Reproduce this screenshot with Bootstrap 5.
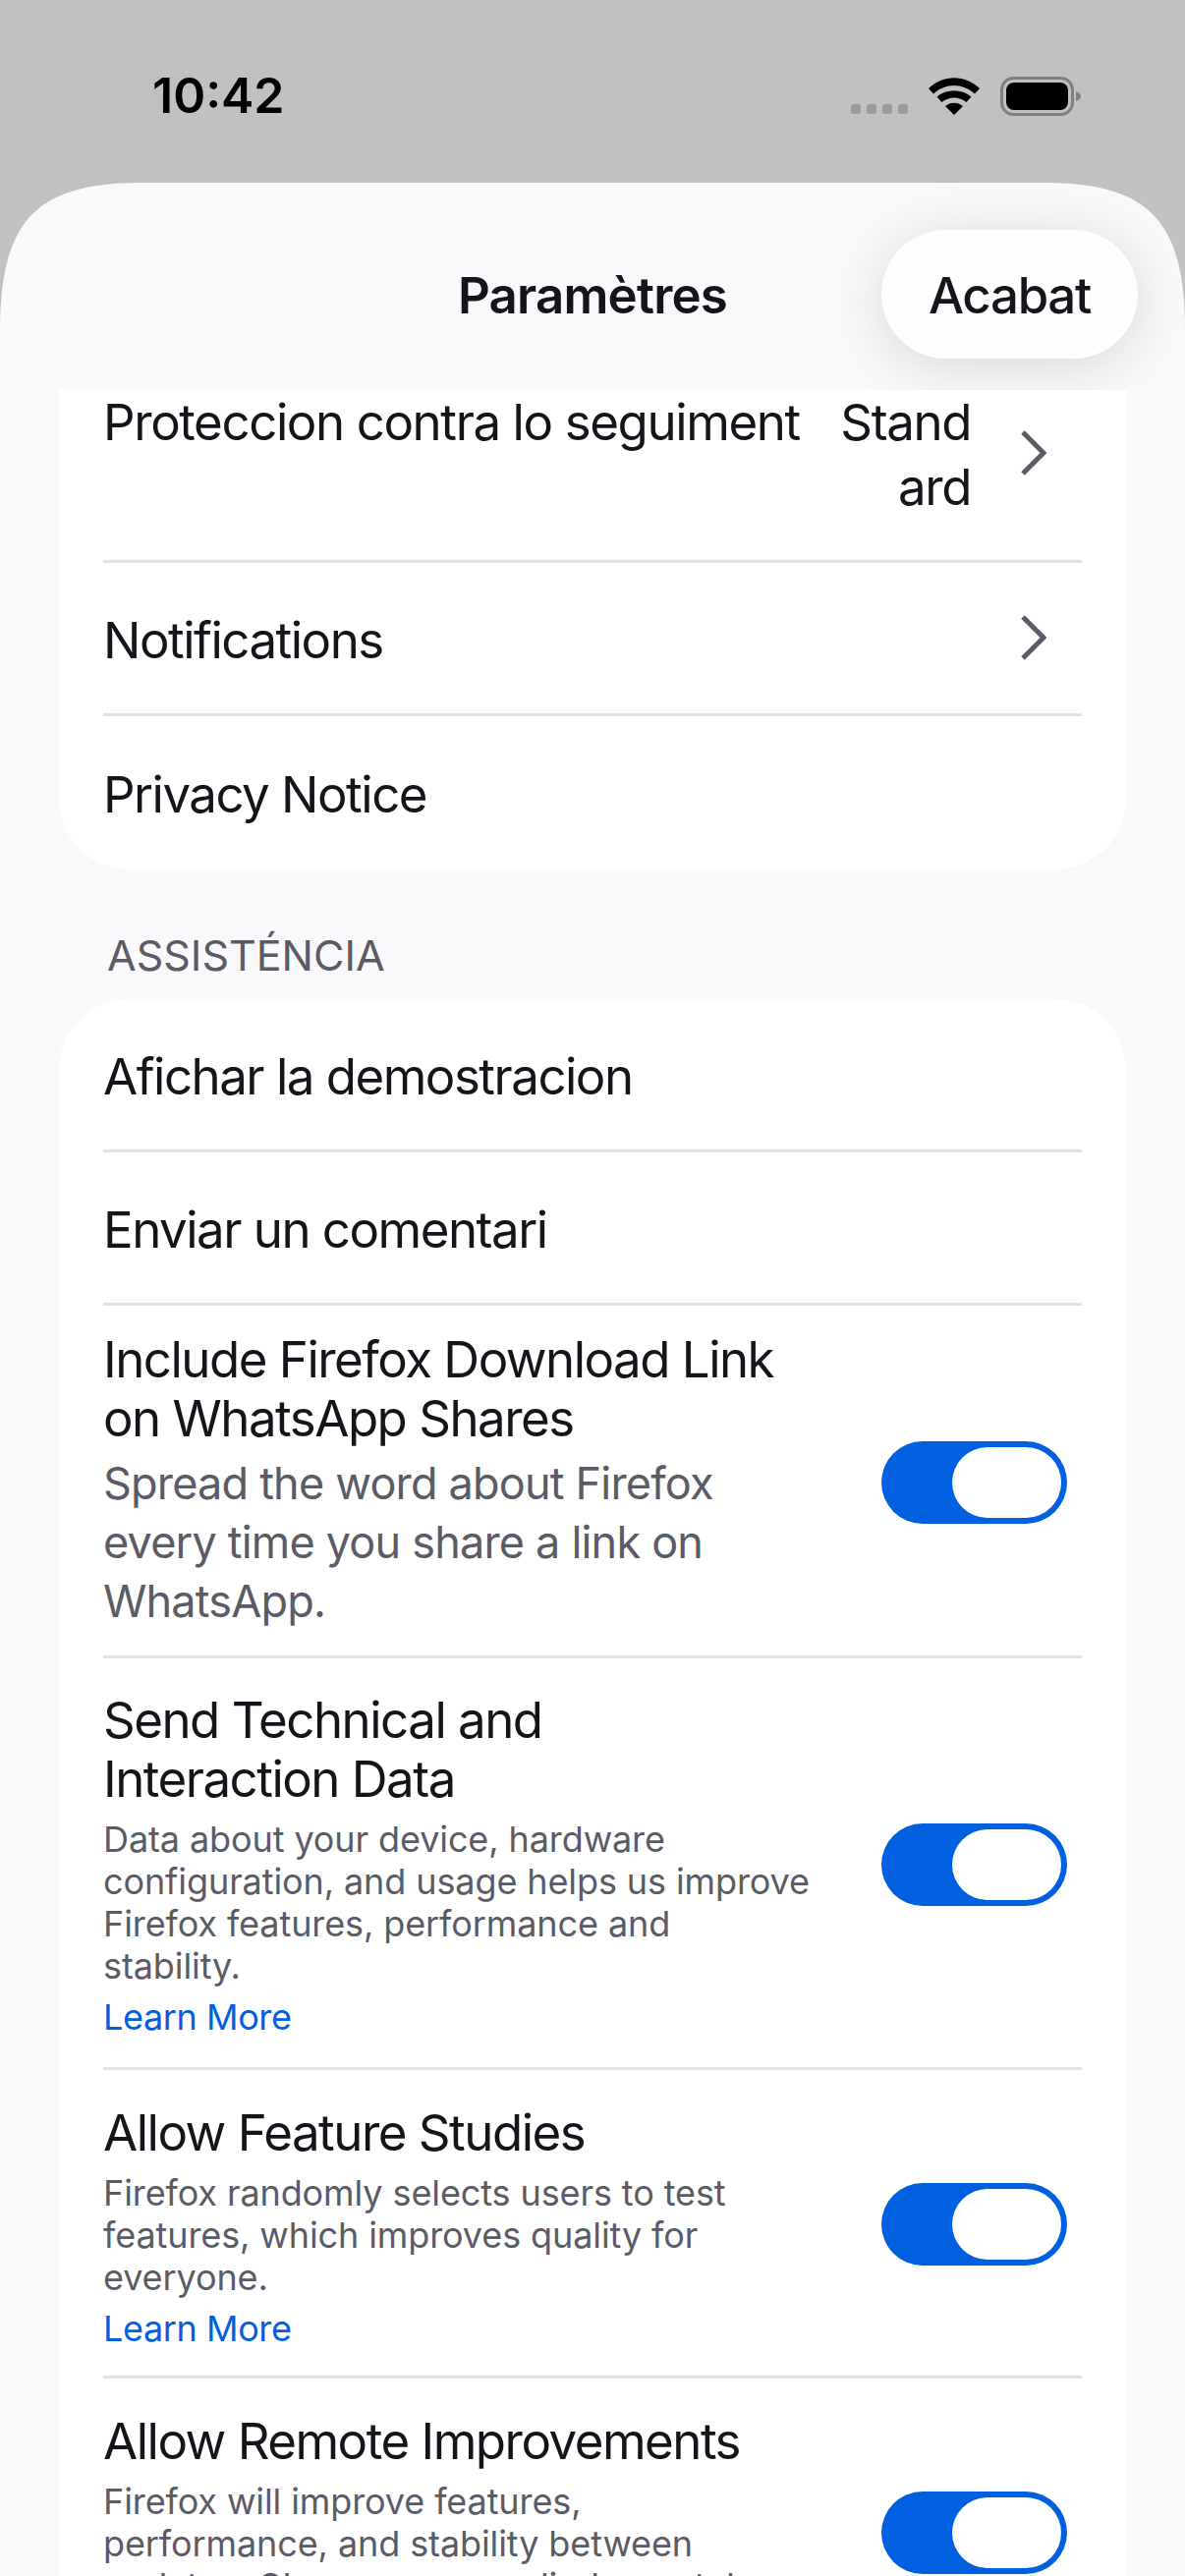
<!DOCTYPE html>
<html lang="fr">
<head>
    <meta charset="UTF-8">
    <title>Paramètres</title>
    <meta name="viewport" content="width=device-width, initial-scale=1">
    <link href="https://cdn.jsdelivr.net/npm/bootstrap@5.3.3/dist/css/bootstrap.min.css" rel="stylesheet">
    <style>
        html, body { height: 2622px; overflow: hidden; }
        body { background: #c1c1c3; font-family: Inter, "Liberation Sans", sans-serif; color: #15141a; }
        .status-bar { height: 186px; padding: 0 105px 0 155px; padding-top: 72px; }
        .status-time { font-size: 50px; font-weight: 600; line-height: 50px; color: #000; }
        .status-icons { margin-top: 6px; gap: 21px; }
        .sheet { height: 2436px; background: #f9f9fb; overflow: hidden; clip-path: path("M0 2436V150C0 35 40 0 145 0H1061C1166 0 1206 35 1206 150V2436Z"); }
        .sheet-head { height: 211px; padding: 48px 48px 0 0; overflow: hidden; }
        .sheet-title { font-size: 51px; font-weight: 600; line-height: 60px; letter-spacing: -.8px; left: 0; right: 0; top: 85px; text-align: center; }
        .done-btn { width: 261px; height: 131px; border-radius: 66px; background: #fdfdfe; border: 0; font-size: 51px; font-weight: 500; line-height: 60px; letter-spacing: -1.3px; color: #15141a; box-shadow: 0 8px 60px rgba(0,0,0,.14); padding: 2px 0 0; }
        .set-group { margin: 0 60px; background: #fff; border-radius: 72px; padding-left: 45px; padding-right: 45px; }
        .set-group.is-cut { border-radius: 0 0 72px 72px; }
        .set-row { border-bottom: 3px solid #e0e0e6; }
        .set-row:last-child { border-bottom: 0; }
        .row-plain { height: 156px; font-size: 51px; line-height: 60px; letter-spacing: -1.5px; padding-top: 4px; }
        .row-plain .chev { margin-top: -6px; }
        .row-cut { height: 176px; font-size: 51px; line-height: 60px; letter-spacing: -1.4px; }
        .row-label { white-space: nowrap; margin-top: 3px; }
        .row-value { width: 150px; line-height: 66px; text-align: right; word-break: break-all; margin: 0 51px 0 0; flex: none; }
        .chev { flex: none; margin-right: 36px; }
        .row-cut .chev { margin-top: 41px; }
        .row-text { width: 722px; }
        .row-title { font-size: 51px; line-height: 60px; letter-spacing: -1.5px; }
        .row-sub-lg { font-size: 45px; line-height: 60px; letter-spacing: -.8px; color: #5b5b66; margin-top: 6px; }
        .row-sub { font-size: 36px; line-height: 43px; letter-spacing: -.1px; color: #5b5b66; margin-top: 10px; }
        .row-link { display: block; font-size: 36px; line-height: 43px; letter-spacing: -.4px; color: #0060df; text-decoration: none; margin-top: 9px; }
        .pad-a { padding-top: 25px; padding-bottom: 25px; }
        .pad-a .sw-track { margin-top: 3px; }
        .pad-b { padding-top: 33px; padding-bottom: 29px; }
        .pad-c { padding-top: 34px; padding-bottom: 26px; }
        .pad-c .sw-track { margin-top: -5px; }
        .section-label { font-size: 43px; line-height: 50px; color: #5b5b66; margin: 62px 0 20px 109px; }
        .sw-track { flex: none; width: 189px; height: 84px; border-radius: 42px; background: #0060df; margin-right: 15px; padding: 6px; }
        .sw-knob { width: 111px; height: 72px; border-radius: 36px; background: #fff; }
    </style>
</head>
<body>
    <!-- status bar -->
    <div class="status-bar d-flex justify-content-between align-items-start">
        <div class="status-time">10:42</div>
        <div class="status-icons d-flex align-items-center">
            <svg width="58" height="40" viewBox="0 0 58 40">
                <g fill="#9b9b9d"><rect x="0" y="28" width="10" height="10" rx="3"/><rect x="16" y="28" width="10" height="10" rx="3"/><rect x="32" y="28" width="10" height="10" rx="3"/><rect x="48" y="28" width="10" height="10" rx="3"/></g>
            </svg>
            <svg width="52" height="38" viewBox="0 0 52 38">
                <path d="M26 38l-9-9c5-4.500 13-4.500 18 0z"/>
                <path d="M13.500 25l-5-5.500c10-8.500 25-8.500 35 0l-5 5.500c-7.500-6-17.500-6-25 0z"/>
                <path d="M5 16.500L0 11c15-14.500 37-14.500 52 0l-5 5.500C34.500 5 17.500 5 5 16.500z"/>
            </svg>
            <svg width="83" height="40" viewBox="0 0 83 40">
                <rect x="1.500" y="1.500" width="72" height="37" rx="12" fill="none" stroke="#808082" stroke-width="3"/>
                <rect x="6" y="6" width="63" height="28" rx="8"/>
                <path d="M77 15c3 1 5 3 5 5s-2 4-5 5z" fill="#808082"/>
            </svg>
        </div>
    </div>

    <div class="sheet">
        <div class="sheet-head position-relative d-flex justify-content-end">
            <div class="sheet-title position-absolute">Paramètres</div>
            <button class="done-btn position-relative" type="button">Acabat</button>
        </div>

        <div class="set-group is-cut">
            <div class="set-row row-cut d-flex align-items-start">
                <div class="row-label flex-grow-1">Proteccion contra lo seguiment</div>
                <div class="row-value">Standard</div>
                <svg class="chev" width="26" height="46" viewBox="0 0 26 46"><path d="M2 2l21 21L2 44" fill="none" stroke="#5b5b66" stroke-width="5"/></svg>
            </div>
            <div class="set-row row-plain d-flex align-items-center justify-content-between">
                <div>Notifications</div>
                <svg class="chev" width="26" height="46" viewBox="0 0 26 46"><path d="M2 2l21 21L2 44" fill="none" stroke="#5b5b66" stroke-width="5"/></svg>
            </div>
            <div class="set-row row-plain d-flex align-items-center">
                <div>Privacy Notice</div>
            </div>
        </div>

        <div class="section-label">ASSISTÉNCIA</div>

        <div class="set-group">
            <div class="set-row row-plain d-flex align-items-center">
                <div>Afichar la demostracion</div>
            </div>
            <div class="set-row row-plain d-flex align-items-center">
                <div>Enviar un comentari</div>
            </div>
            <div class="set-row pad-a d-flex align-items-center justify-content-between">
                <div class="row-text">
                    <div class="row-title">Include Firefox Download Link on WhatsApp Shares</div>
                    <div class="row-sub-lg">Spread the word about Firefox every time you share a link on WhatsApp.</div>
                </div>
                <div class="sw-track d-flex justify-content-end"><div class="sw-knob"></div></div>
            </div>
            <div class="set-row pad-b d-flex align-items-center justify-content-between">
                <div class="row-text">
                    <div class="row-title">Send Technical and<br>Interaction Data</div>
                    <div class="row-sub">Data about your device, hardware configuration, and usage helps us improve Firefox features, performance and stability.</div>
                    <a class="row-link" href="#">Learn More</a>
                </div>
                <div class="sw-track d-flex justify-content-end"><div class="sw-knob"></div></div>
            </div>
            <div class="set-row pad-c d-flex align-items-center justify-content-between">
                <div class="row-text">
                    <div class="row-title">Allow Feature Studies</div>
                    <div class="row-sub">Firefox randomly selects users to test features, which improves quality for everyone.</div>
                    <a class="row-link" href="#">Learn More</a>
                </div>
                <div class="sw-track d-flex justify-content-end"><div class="sw-knob"></div></div>
            </div>
            <div class="set-row pad-c d-flex align-items-center justify-content-between">
                <div class="row-text">
                    <div class="row-title">Allow Remote Improvements</div>
                    <div class="row-sub">Firefox will improve features, performance, and stability between updates. Changes are applied remotely.</div>
                    <a class="row-link" href="#">Learn More</a>
                </div>
                <div class="sw-track d-flex justify-content-end"><div class="sw-knob"></div></div>
            </div>
        </div>
    </div>
    <script src="https://cdn.jsdelivr.net/npm/bootstrap@5.3.3/dist/js/bootstrap.bundle.min.js"></script>
</body>
</html>
